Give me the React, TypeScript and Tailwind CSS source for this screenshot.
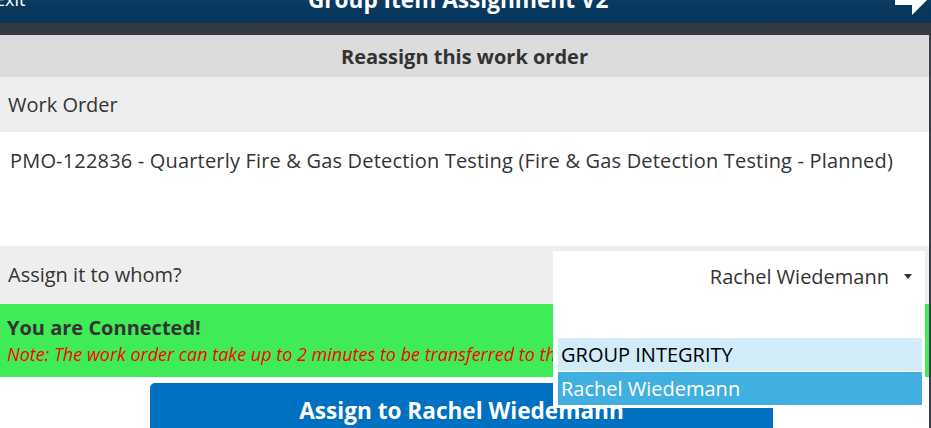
const AssignmentHeader = () => (
  <header className="-mt-[20px] h-[43px] flex items-start justify-between overflow-hidden bg-linear-to-b from-[#3a6890] via-[#0a3a60] via-50% to-[#06345a] text-white">
    <span className="-ml-[5px] mt-[7px] text-[18px] leading-[24px]">Exit</span>
    <h1 className="mt-[5px] mr-[4px] text-[22.6px] leading-[30px] font-bold">Group Item Assignment V2</h1>
    <svg width="36" height="43" viewBox="0 0 36 43" className="overflow-visible">
      <rect x="0" y="10" width="18" height="15" fill="#ffffff" />
      <polygon points="17,-1 35,17 17,35" fill="#ffffff" />
    </svg>
  </header>
);

const AssigneeSelect = () => (
  <div className="relative self-start mt-[5px] mr-[4px] w-[372px] h-[53px] bg-white">
    <div className="flex h-full items-start justify-end pt-[12px] pr-[13px]">
      <span className="text-[20px] leading-[27px] text-[#333]">Rachel Wiedemann</span>
      <span className="ml-[15px] mt-[11px] h-0 w-0 border-x-[4.5px] border-t-[5px] border-x-transparent border-t-[#333]" />
    </div>
    <div className="absolute left-0 right-0 top-full z-10 flex flex-col gap-px bg-white pl-[5px] pr-[3px] pt-[34px] pb-[3px]">
      <div className="h-[33px] bg-[#d1ebf8] pl-[3px] text-[20px] leading-[33px] text-black">GROUP INTEGRITY</div>
      <div className="h-[33px] bg-[#41b0e0] pl-[3px] text-[20px] leading-[33px] text-white">Rachel Wiedemann</div>
    </div>
  </div>
);

export default function App() {
  return (
    <div className="h-[428px] overflow-hidden bg-white font-['Open_Sans',sans-serif] text-[#333]">
      <AssignmentHeader />
      <div className="h-[12px] bg-[#343a45]" />
      <div className="border-r-2 border-[#3a3f48]">
        <div className="h-[42px] bg-[#dcdcdc] pt-[8px] text-center text-[20px] leading-[27px] font-bold">Reassign this work order</div>
        <div className="h-[55px] bg-[#eeeeee] pl-[8px] pt-[14px] text-[20px] leading-[27px]">Work Order</div>
        <div className="h-[114px] bg-white px-[10px] pt-[15px] text-[20px] leading-[27px] tracking-[0.18px]">
          PMO-122836 - Quarterly Fire &amp; Gas Detection Testing (Fire &amp; Gas Detection Testing - Planned)
        </div>
        <div className="relative z-10 h-[58px] flex items-start justify-between bg-[#eeeeee]">
          <span className="pl-[8px] pt-[15px] text-[20px] leading-[27px]">Assign it to whom?</span>
          <AssigneeSelect />
        </div>
        <div className="h-[73px] bg-[#3feb57] pl-[7px] pt-[10px] whitespace-nowrap overflow-hidden">
          <div className="text-[20px] leading-[27px] font-bold">You are Connected!</div>
          <div className="text-[18px] leading-[27px] italic text-[#ff0000]">Note: The work order can take up to 2 minutes to be transferred to the new assignee.</div>
        </div>
        <div className="pt-[6px]">
          <button className="ml-[150px] w-[623px] h-[50px] rounded-t-[5px] bg-[#0070c0] pt-[6px] text-[22.6px] leading-[30px] font-bold text-white">
            Assign to Rachel Wiedemann
          </button>
        </div>
      </div>
    </div>
  );
}
